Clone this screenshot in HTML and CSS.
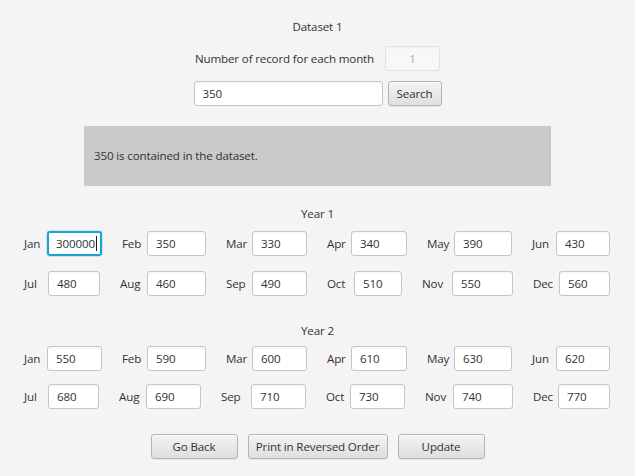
FILE: index.html
```html
<!DOCTYPE html>
<html lang="en">
<head>
<meta charset="utf-8">
<title>Dataset 1</title>
<link rel="stylesheet" href="styles.css">
</head>
<body>
<div class="app">
  <div class="title">Dataset 1</div>

  <div class="count-row">
    <span class="label">Number of record for each month</span>
    <div class="field disabled">1</div>
  </div>

  <div class="search-row">
    <div class="field search-field">350</div>
    <div class="btn search-btn">Search</div>
  </div>

  <div class="result">350 is contained in the dataset.</div>

  <div class="title year-title">Year 1</div>
  <div class="months row-a first-row">
    <span class="label">Jan</span><div class="field focused">300000<span class="caret"></span></div>
    <span class="label">Feb</span><div class="field">350</div>
    <span class="label">Mar</span><div class="field">330</div>
    <span class="label">Apr</span><div class="field">340</div>
    <span class="label">May</span><div class="field">390</div>
    <span class="label">Jun</span><div class="field">430</div>
  </div>
  <div class="months row-b second-row">
    <span class="label">Jul</span><div class="field">480</div>
    <span class="label">Aug</span><div class="field">460</div>
    <span class="label">Sep</span><div class="field">490</div>
    <span class="label">Oct</span><div class="field">510</div>
    <span class="label">Nov</span><div class="field">550</div>
    <span class="label">Dec</span><div class="field">560</div>
  </div>

  <div class="title year-title year-two">Year 2</div>
  <div class="months row-a first-row-two">
    <span class="label">Jan</span><div class="field">550</div>
    <span class="label">Feb</span><div class="field">590</div>
    <span class="label">Mar</span><div class="field">600</div>
    <span class="label">Apr</span><div class="field">610</div>
    <span class="label">May</span><div class="field">630</div>
    <span class="label">Jun</span><div class="field">620</div>
  </div>
  <div class="months row-c second-row-two">
    <span class="label">Jul</span><div class="field">680</div>
    <span class="label">Aug</span><div class="field">690</div>
    <span class="label">Sep</span><div class="field">710</div>
    <span class="label">Oct</span><div class="field">730</div>
    <span class="label">Nov</span><div class="field">740</div>
    <span class="label">Dec</span><div class="field">770</div>
  </div>

  <div class="actions">
    <div class="btn btn-back">Go Back</div>
    <div class="btn btn-reverse">Print in Reversed Order</div>
    <div class="btn btn-update">Update</div>
  </div>
</div>
</body>
</html>
```

FILE: styles.css
```css
html, body {
  margin: 0;
  padding: 0;
}

body {
  background: #f4f4f4;
  font-family: "Open Sans", "Segoe UI", sans-serif;
  font-size: 11.6px;
  letter-spacing: -0.15px;
  line-height: 16px;
  color: #333333;
}

.app {
  width: 635px;
  height: 476px;
  box-sizing: border-box;
  padding-top: 19px;
  overflow: hidden;
}

.title {
  height: 16px;
  text-align: center;
}

.label {
  white-space: nowrap;
}

.field {
  box-sizing: border-box;
  height: 25px;
  display: flex;
  align-items: center;
  padding: 0 8px;
  border: 1px solid #c6c6c6;
  border-radius: 3px;
  background: linear-gradient(#f7f7f7, #ffffff 4px);
  white-space: nowrap;
  overflow: hidden;
  color: #333333;
}

.field.disabled {
  width: 55px;
  justify-content: center;
  opacity: 0.4;
}

.field.focused {
  border: 2px solid #1fa0d6;
  padding-left: 7px;
  box-shadow: 0 0 0 1px rgba(3, 158, 211, 0.18);
  background: #ffffff;
}

.caret {
  display: inline-block;
  flex: none;
  width: 1px;
  height: 15px;
  margin-left: 1px;
  background: #1a1a1a;
}

.count-row {
  margin-top: 11px;
  height: 25px;
  display: flex;
  justify-content: center;
  align-items: center;
  gap: 11px;
}

.search-row {
  margin-top: 10px;
  height: 25px;
  display: flex;
  justify-content: center;
  align-items: center;
  gap: 5px;
}

.search-field {
  width: 189px;
}

.btn {
  box-sizing: border-box;
  height: 25px;
  display: flex;
  align-items: center;
  justify-content: center;
  border: 1px solid #b4b4b4;
  border-radius: 3px;
  background: linear-gradient(#f4f4f4, #dedede);
  box-shadow: inset 0 1px 0 rgba(255, 255, 255, 0.75), 0 1px 0 rgba(0, 0, 0, 0.05);
  color: #333333;
  white-space: nowrap;
}

.search-btn {
  width: 54px;
}

.result {
  box-sizing: border-box;
  width: 467px;
  height: 60px;
  margin: 20px auto 0;
  padding-left: 10px;
  display: flex;
  align-items: center;
  background: #cacaca;
}

.year-title {
  margin-top: 20px;
}

.year-title.year-two {
  margin-top: 27px;
}

.months {
  display: grid;
  height: 25px;
  padding-left: 24px;
  align-items: center;
}

.months .field {
  margin-right: 20px;
}

.row-a {
  grid-template-columns: 23px 75px 25px 79px 26px 75px 24px 76px 27px 78px 24px 74px;
}

.row-b {
  grid-template-columns: 24px 72px 27px 79px 26px 75px 27px 68px 30px 81px 26px 71px;
}

.row-c {
  grid-template-columns: 24px 71px 27px 75px 30px 75px 24px 75px 28px 80px 25px 72px;
}

.first-row {
  margin-top: 9px;
}

.second-row {
  margin-top: 15px;
}

.first-row-two {
  margin-top: 7px;
}

.second-row-two {
  margin-top: 13px;
}

.actions {
  margin-top: 25px;
  display: flex;
  justify-content: center;
  gap: 10px;
}

.btn-back,
.btn-update {
  width: 87px;
}

.btn-reverse {
  width: 140px;
}
```
